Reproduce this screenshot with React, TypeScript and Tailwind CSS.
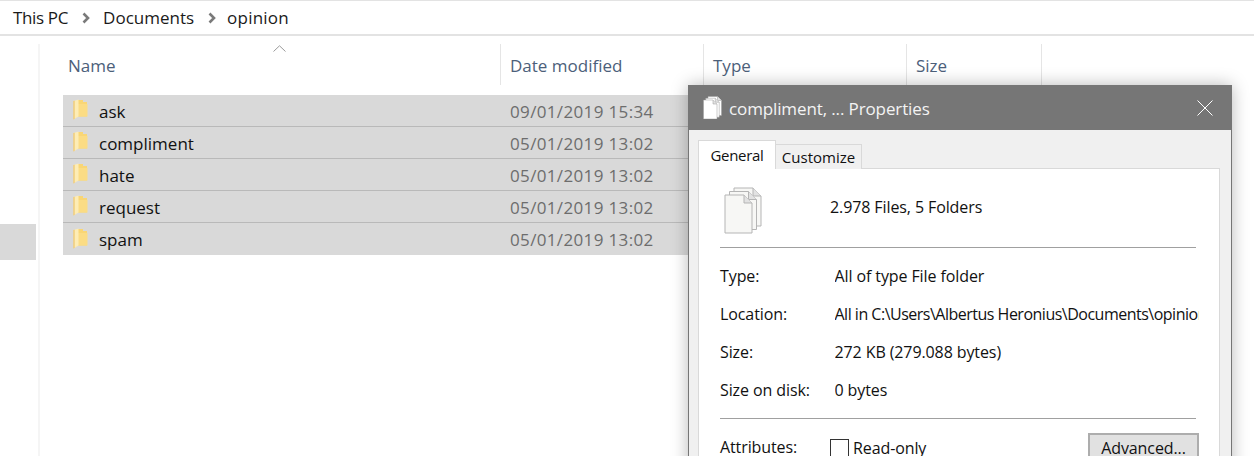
const font = "font-['Open_Sans','Noto_Sans',sans-serif]";

function Chevron() {
  return (
    <svg width="8" height="12" viewBox="0 0 8 12" className="shrink-0">
      <path d="M1.5 1.5 L6 6 L1.5 10.5" fill="none" stroke="#7a7a7a" strokeWidth="2.6" />
    </svg>
  );
}

function FolderIcon() {
  return (
    <svg width="15" height="21" viewBox="0 0 15 21" className="shrink-0">
      <path d="M5 1 H10 V3 H14 V17.5 H5 Z" fill="#f9d675" />
      <path d="M5 5 H14.5 V17.5 H5 Z" fill="#fbdc84" />
      <path d="M0.5 2 L5.5 0.5 V17.5 L0.5 20.5 Z" fill="#fdecb5" />
      <path d="M0.5 2 L1.5 1.7 V20 L0.5 20.5 Z" fill="#ebbd5e" />
    </svg>
  );
}

function PagesIcon({ width, stroke, fill }: { width: number; stroke: string; fill: string }) {
  const page = "M1 8 H20 L28 16 V46 H1 Z";
  return (
    <svg width={width} height={(width * 47) / 38} viewBox="0 0 38 47">
      {[9, 4.5, 0].map((d) => (
        <g key={d} transform={`translate(${d},${(-d * 7) / 9})`}>
          <path d={page} fill={fill} stroke={stroke} strokeWidth="1" />
          <path d="M20 8 V16 H28" fill="#e2e2e2" stroke={stroke} strokeWidth="1" />
        </g>
      ))}
    </svg>
  );
}

const rows = [
  ["ask", "09/01/2019 15:34"],
  ["compliment", "05/01/2019 13:02"],
  ["hate", "05/01/2019 13:02"],
  ["request", "05/01/2019 13:02"],
  ["spam", "05/01/2019 13:02"],
];

const columns = [
  ["Name", "w-[437px] pl-[5px]"],
  ["Date modified", "w-[203px] pl-[9px] border-l border-[#e5e5e5]"],
  ["Type", "w-[203px] pl-[9px] border-l border-[#e5e5e5]"],
  ["Size", "w-[136px] pl-[9px] border-l border-[#e5e5e5] border-r"],
];

const props = [
  ["Type:", "All of type File folder", ""],
  ["Location:", "All in C:\\Users\\Albertus Heronius\\Documents\\opinion", "tracking-[-0.5px]"],
  ["Size:", "272 KB (279.088 bytes)", ""],
  ["Size on disk:", "0 bytes", ""],
];

export default function App() {
  return (
    <div className={`relative w-[1254px] h-[456px] overflow-hidden bg-white flex flex-col ${font}`}>
      <div className="h-[36px] shrink-0 border-y-2 border-[#e3e3e3] border-t-[1px] flex items-center pl-[13px] gap-[13.5px] text-[17px] text-[#1a1a1a]">
        <span className="tracking-[-0.35px]">This PC</span>
        <Chevron />
        <span>Documents</span>
        <Chevron />
        <span className="-ml-[2px] tracking-[0.2px]">opinion</span>
      </div>

      <div className="flex flex-1 min-h-0">
        <div className="w-[40px] shrink-0 border-r-2 border-[#f5f5f5] mt-[8px] flex flex-col pt-[180px]">
          <div className="w-[36px] h-[36px] bg-[#d9d9d9]" />
        </div>

        <div className="flex flex-col pl-[23px] flex-1">
          <div className="relative flex h-[41px] mt-[8px] pt-[2px] text-[17px] text-[#4c607a]">
            {columns.map(([label, cls]) => (
              <div key={label} className={`flex items-center -mt-[2px] pt-[2px] ${cls}`}>
                {label}
              </div>
            ))}
            <svg width="13" height="7" viewBox="0 0 13 7" className="absolute left-[210px] top-[1px]">
              <path d="M0.5 6.5 L6.5 0.8 L12.5 6.5" fill="none" stroke="#9a9a9a" strokeWidth="1" />
            </svg>
          </div>

          <div className="mt-[10px] w-[640px] flex flex-col">
            {rows.map(([name, date], i) => (
              <div
                key={name}
                className={`h-[32px] bg-[#d9d9d9] flex items-center pt-[2px] ${i < 4 ? "border-b border-[#b9b9b9]" : ""}`}
              >
                <div className="w-[36px] pl-[10px] shrink-0 flex items-center -mt-[4px]">
                  <FolderIcon />
                </div>
                <span className="w-[411px] text-[17px] text-[#111]">{name}</span>
                <span className="text-[17px] tracking-[0.35px] text-[#6d6d6d]">{date}</span>
              </div>
            ))}
          </div>
        </div>
      </div>

      <div className="absolute left-[688px] top-[85px] w-[544px] h-[400px] bg-[#f0f0f0] border-x border-[#767676] shadow-[0_0_16px_rgba(0,0,0,0.28)] flex flex-col">
        <div className="h-[45px] shrink-0 -mx-px bg-[#767676] flex items-center pl-[15px] pr-[19px]">
          <PagesIcon width={19} stroke="#9a9a9a" fill="#ffffff" />
          <span className="ml-[7px] pt-[2px] text-[17px] tracking-[-0.12px] text-[#f3f3f3]">compliment, ... Properties</span>
          <svg width="16" height="16" viewBox="0 0 16 16" className="ml-auto">
            <path d="M0.5 0.5 L15.5 15.5 M15.5 0.5 L0.5 15.5" stroke="#fff" strokeWidth="1" />
          </svg>
        </div>

        <div className="flex items-end pl-[9px] h-[38px] shrink-0 relative z-10 translate-y-px text-[15px]">
          <div className="h-[29px] w-[78px] bg-white border border-b-0 border-[#d9d9d9] flex items-center justify-center text-[#111] tracking-[-0.3px]">
            General
          </div>
          <div className="h-[25px] w-[86px] bg-[#f0f0f0] border border-l-0 border-b-0 border-[#d9d9d9] flex items-center justify-center text-[#111]">
            Customize
          </div>
        </div>

        <div className="ml-[9px] w-[522px] flex-1 bg-white border border-[#d9d9d9] px-[21px] text-[16px] tracking-[-0.1px] text-[#111]">
          <div className="h-[79px] flex items-center border-b border-[#a0a0a0] w-[476px]">
            <div className="w-[110px] pl-[4px] shrink-0 translate-y-[2px]">
              <PagesIcon width={38} stroke="#b5b5b5" fill="#f7f7f5" />
            </div>
            <span className="-translate-y-[1px]">2.978 Files, 5 Folders</span>
          </div>

          <div className="flex flex-col pt-[9px] pb-[9px] border-b border-[#a0a0a0] w-[476px]">
            {props.map(([k, v, extra]) => (
              <div key={k} className="h-[38px] w-[479px] flex items-center whitespace-nowrap">
                <span className="w-[114.5px] shrink-0">{k}</span>
                <span className={`overflow-hidden w-[365px] ${extra}`}>{v}</span>
              </div>
            ))}
          </div>

          <div className="flex items-center pt-[14px] w-[479px] whitespace-nowrap">
            <span className="w-[110px] shrink-0 -translate-y-px">Attributes:</span>
            <div className="w-[19px] h-[19px] border border-[#333] bg-white shrink-0" />
            <span className="ml-[4px]">Read-only</span>
            <div className="ml-auto w-[111px] h-[30px] bg-[#e1e1e1] border-2 border-[#adadad] flex items-center justify-center">
              Advanced...
            </div>
          </div>
        </div>
      </div>
    </div>
  );
}
